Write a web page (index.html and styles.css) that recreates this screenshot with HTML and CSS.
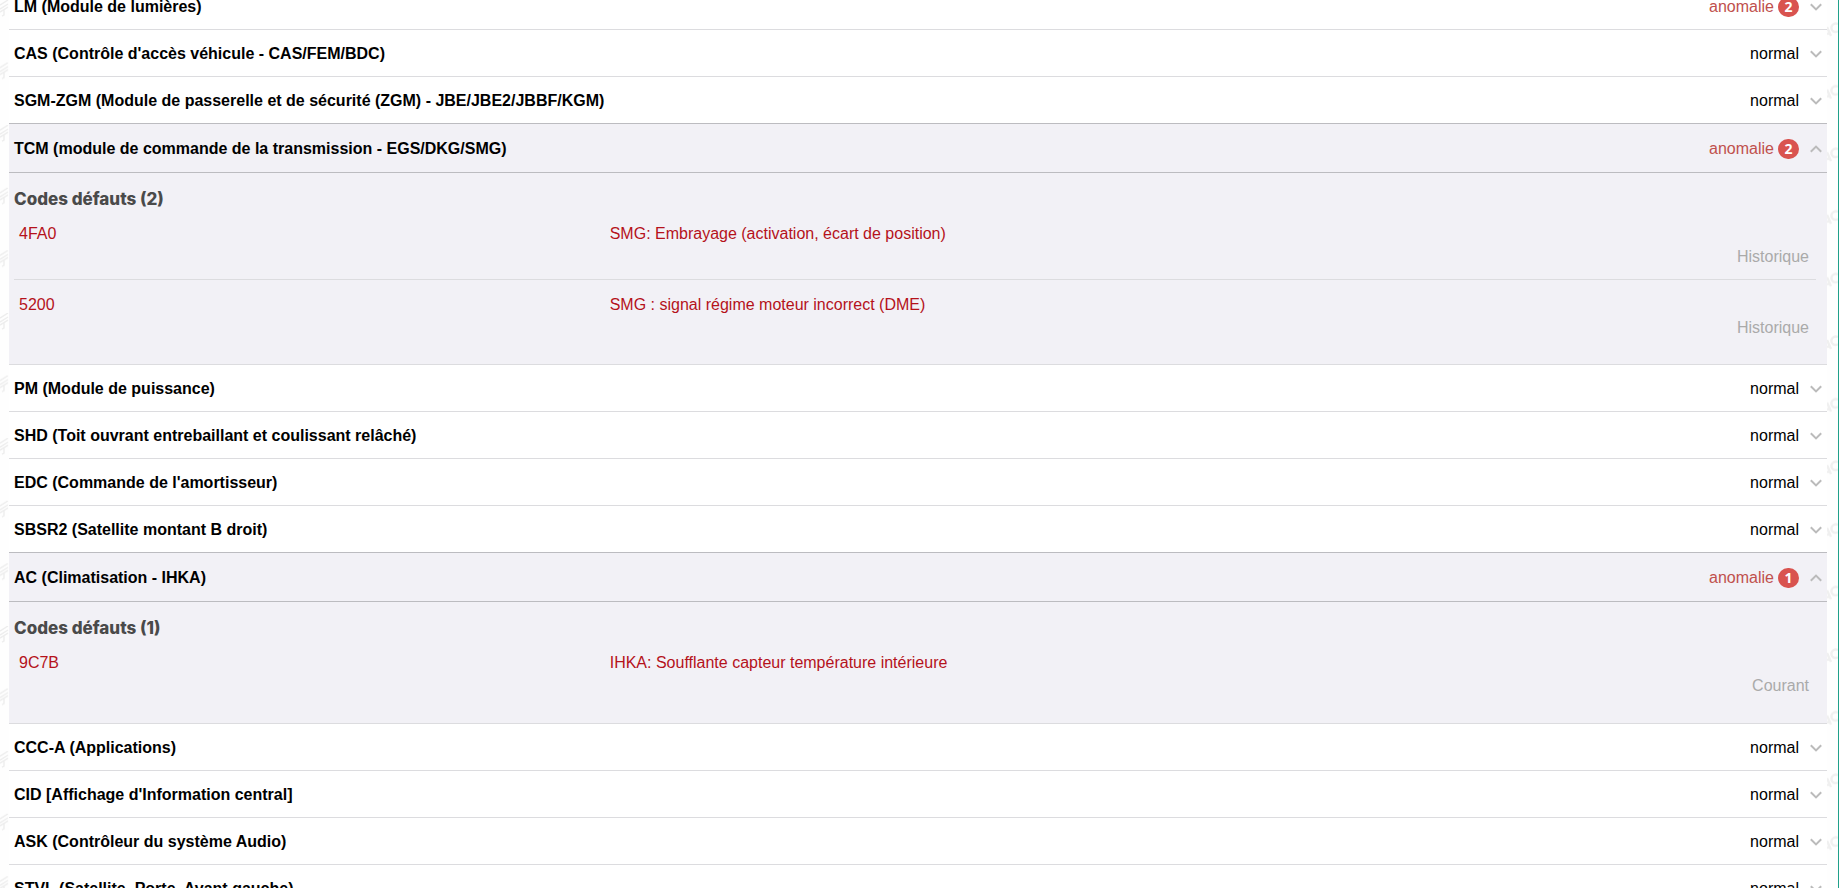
FILE: index.html
```
<!DOCTYPE html>
<html lang="fr">

<head>
  <meta charset="UTF-8" />
  <meta name="viewport" content="width=device-width, initial-scale=1.0" />
  <title>Rapport de diagnostic</title>
  <link rel="stylesheet" href="styles.css">
</head>

<body>
  <svg class="defs" aria-hidden="true">
    <defs>
      <!-- chevron -->
      <symbol id="chevron" viewBox="0 0 12 8">
        <path d="M0.8 1.2 L6 6.4 L11.2 1.2" fill="none" stroke="currentColor" stroke-width="2" />
      </symbol>
      <!-- watermark -->
      <pattern id="mark-left" width="9" height="62.6" patternUnits="userSpaceOnUse">
        <path d="M0 5 L8 0 M0 9 L8 4 M0 12 L8 7 M4 10 L4 15 L2 16" fill="none" stroke="#ededed" stroke-width="1.4" />
      </pattern>
      <pattern id="mark-right" y="22" width="11" height="62.6" patternUnits="userSpaceOnUse">
        <path d="M0 5 L4 14 M0 12 L3 11" fill="none" stroke="#f0f0f0" stroke-width="2.4" />
        <path d="M11 2 C7 0 3 4 5 8 C7 11 10 10 11 9" fill="none" stroke="#f0f0f0" stroke-width="2.4" />
      </pattern>
    </defs>
  </svg>

  <div class="page">
    <svg class="mark" aria-hidden="true"><rect width="9" height="100%" fill="url(#mark-left)" /></svg>
    <main class="report">
      <button class="row">
        <span class="name">LM (Module de lumières)</span>
        <span class="state error">anomalie <b class="badge">2</b></span>
        <svg class="arrow"><use href="#chevron" /></svg>
      </button>
      <button class="row">
        <span class="name">CAS (Contrôle d'accès véhicule - CAS/FEM/BDC)</span>
        <span class="state">normal</span>
        <svg class="arrow"><use href="#chevron" /></svg>
      </button>
      <button class="row">
        <span class="name">SGM-ZGM (Module de passerelle et de sécurité (ZGM) - JBE/JBE2/JBBF/KGM)</span>
        <span class="state">normal</span>
        <svg class="arrow"><use href="#chevron" /></svg>
      </button>

      <button class="row open" aria-expanded="true">
        <span class="name">TCM (module de commande de la transmission - EGS/DKG/SMG)</span>
        <span class="state error">anomalie <b class="badge">2</b></span>
        <svg class="arrow"><use href="#chevron" /></svg>
      </button>
      <section class="detail">
        <h2>Codes défauts (2)</h2>
        <div class="fault">
          <span class="code">4FA0</span>
          <span class="text">SMG: Embrayage (activation, écart de position)</span>
          <span class="status">Historique</span>
        </div>
        <div class="fault">
          <span class="code">5200</span>
          <span class="text">SMG : signal régime moteur incorrect (DME)</span>
          <span class="status">Historique</span>
        </div>
      </section>

      <button class="row">
        <span class="name">PM (Module de puissance)</span>
        <span class="state">normal</span>
        <svg class="arrow"><use href="#chevron" /></svg>
      </button>
      <button class="row">
        <span class="name">SHD (Toit ouvrant entrebaillant et coulissant relâché)</span>
        <span class="state">normal</span>
        <svg class="arrow"><use href="#chevron" /></svg>
      </button>
      <button class="row">
        <span class="name">EDC (Commande de l'amortisseur)</span>
        <span class="state">normal</span>
        <svg class="arrow"><use href="#chevron" /></svg>
      </button>
      <button class="row">
        <span class="name">SBSR2 (Satellite montant B droit)</span>
        <span class="state">normal</span>
        <svg class="arrow"><use href="#chevron" /></svg>
      </button>

      <button class="row open" aria-expanded="true">
        <span class="name">AC (Climatisation - IHKA)</span>
        <span class="state error">anomalie <b class="badge">1</b></span>
        <svg class="arrow"><use href="#chevron" /></svg>
      </button>
      <section class="detail">
        <h2>Codes défauts (1)</h2>
        <div class="fault">
          <span class="code">9C7B</span>
          <span class="text">IHKA: Soufflante capteur température intérieure</span>
          <span class="status">Courant</span>
        </div>
      </section>

      <button class="row">
        <span class="name">CCC-A (Applications)</span>
        <span class="state">normal</span>
        <svg class="arrow"><use href="#chevron" /></svg>
      </button>
      <button class="row">
        <span class="name">CID [Affichage d'Information central]</span>
        <span class="state">normal</span>
        <svg class="arrow"><use href="#chevron" /></svg>
      </button>
      <button class="row">
        <span class="name">ASK (Contrôleur du système Audio)</span>
        <span class="state">normal</span>
        <svg class="arrow"><use href="#chevron" /></svg>
      </button>
      <button class="row">
        <span class="name">STVL (Satellite, Porte, Avant gauche)</span>
        <span class="state">normal</span>
        <svg class="arrow"><use href="#chevron" /></svg>
      </button>
    </main>
    <svg class="mark" aria-hidden="true"><rect width="11" height="100%" fill="url(#mark-right)" /></svg>
  </div>
</body>

</html>
```
FILE: styles.css
```
* {
  margin: 0;
  padding: 0;
  box-sizing: border-box;
}

body {
  height: 100vh;
  overflow: hidden;
  background-color: #fefefe;
  color: #000;
  font-family: "Liberation Sans", Arial, sans-serif;
  font-size: 16px;
  line-height: 20px;
}

.defs {
  display: block;
  width: 0;
  height: 0;
}

.page {
  display: grid;
  grid-template-columns: 9px 1fr 11px;
  height: 100vh;
  overflow: hidden;
  border-right: 1px solid #1fa08a;
}

.mark {
  width: 100%;
  height: 100%;
}

/* the list is scrolled a little way into the first row */
.report {
  margin-top: -17px;
}

/**
 * module row
 */
.row {
  display: flex;
  align-items: center;
  width: 100%;
  height: 47px;
  padding: 1px 5px 0;
  border: 0;
  border-bottom: 1px solid #dcdcdf;
  background-color: #fff;
  color: inherit;
  font: inherit;
  text-align: left;
  cursor: pointer;
}

.row.open {
  height: 49px;
  border-bottom-color: #bcbcc0;
  background-color: #f2f1f6;
  box-shadow: 0 -1px #bcbcc0;
}

.name {
  flex: 1;
  font-weight: bold;
}

.state {
  display: flex;
  align-items: center;
  gap: 4px;
}

.error {
  color: #c0504d;
}

.badge {
  width: 21px;
  height: 20px;
  border-radius: 10px;
  background-color: #d9534f;
  color: #fff;
  font-family: "Open Sans", sans-serif;
  font-size: 14px;
  text-align: center;
}

.arrow {
  width: 12px;
  height: 8px;
  margin-left: 11px;
  color: #bbb;
}

.open .arrow {
  transform: rotate(180deg);
}

/**
 * fault codes
 */
.detail {
  padding: 16px 11px 15px 5px;
  border-bottom: 1px solid #dcdcdf;
  background-color: #f2f1f6;
}

.detail h2 {
  color: #4a4a4a;
  font-family: Inter, sans-serif;
  font-size: 17px;
  font-weight: 800;
}

.fault {
  display: grid;
  grid-template-columns: 33% 1fr;
  align-content: start;
  row-gap: 3px;
  height: 70px;
  padding: 15px 7px 0 5px;
  color: #b5121b;
}

.fault + .fault {
  border-top: 1px solid #dcdcdf;
}

.status {
  grid-column: 2;
  color: #aaa;
  text-align: right;
}
```
